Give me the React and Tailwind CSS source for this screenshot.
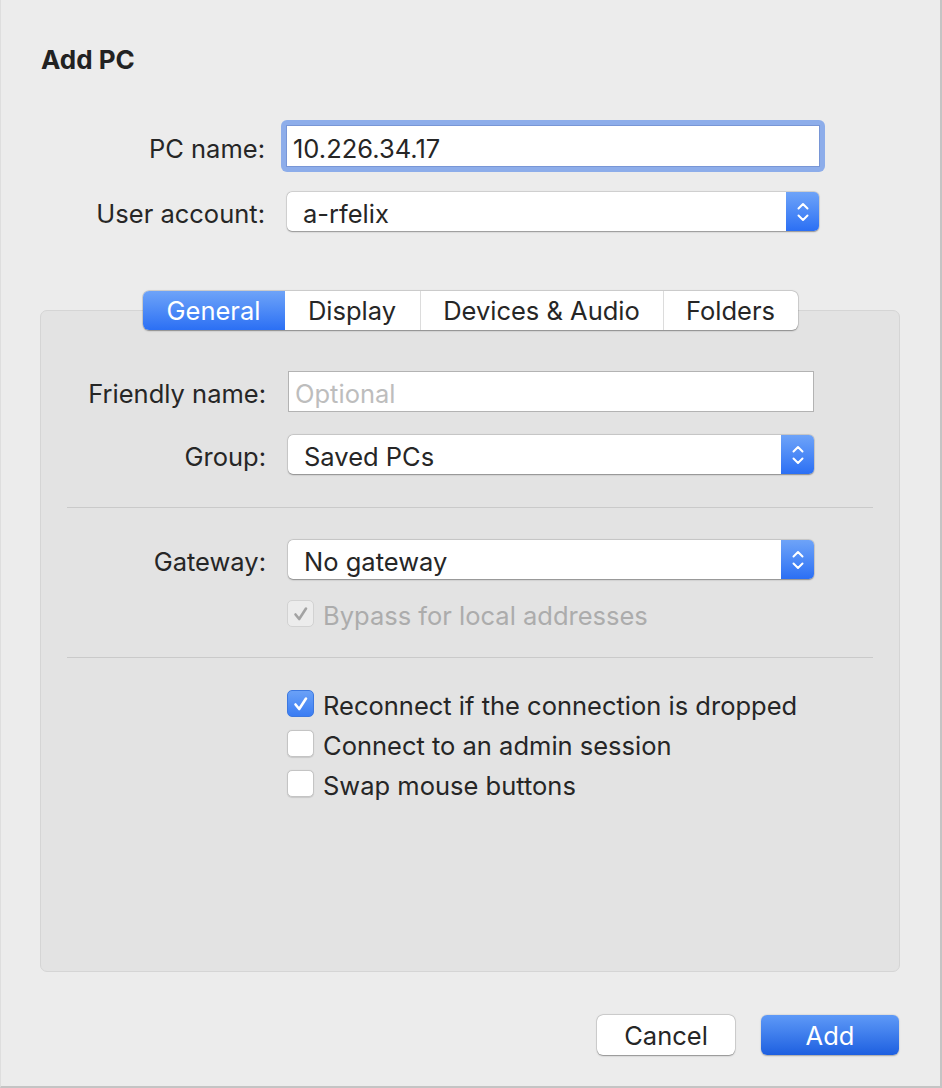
import React from 'react';

const font = "font-['Inter','Liberation_Sans',sans-serif]";

function Stepper() {
  return (
    <div className="w-[33px] h-full rounded-r-[5px] bg-gradient-to-b from-[#6ea3f8] to-[#2b6ff4] flex items-center justify-center">
      <svg width="16" height="28" viewBox="0 0 16 28" fill="none" stroke="white" strokeWidth="2" strokeLinecap="round" strokeLinejoin="round">
        <path d="M3.5 10.5 L8 6 L12.5 10.5" />
        <path d="M3.5 17.5 L8 22 L12.5 17.5" />
      </svg>
    </div>
  );
}

function Popup({ value, width }) {
  return (
    <div
      className={`${width} h-[39px] flex bg-white rounded-[5px] shadow-[0_0.5px_1.5px_rgba(0,0,0,0.35),0_0_0_0.5px_rgba(0,0,0,0.12)]`}
    >
      <div className="flex-1 flex items-center pl-[16px] text-[25.5px] text-[#262626]">
        <span className="translate-y-[3px]">{value}</span>
      </div>
      <Stepper />
    </div>
  );
}

function Check({ checked, disabled, label }) {
  let box = 'bg-white border border-[#c4c4c4] shadow-[0_0.5px_1px_rgba(0,0,0,0.12)]';
  if (checked && !disabled) box = 'bg-gradient-to-b from-[#6aa1f7] to-[#3a7cf3] border border-[#3c78e0]';
  if (disabled) box = 'bg-[#ececec] border border-[#d2d2d2]';
  return (
    <div className="flex items-center h-[27px]">
      <div className={`w-[27px] h-[27px] rounded-[5px] flex items-center justify-center ${box}`}>
        {checked && (
          <svg width="18" height="18" viewBox="0 0 18 18" fill="none" stroke={disabled ? '#a3a3a3' : 'white'} strokeWidth="2.6" strokeLinecap="round" strokeLinejoin="round">
            <path d="M3.5 9.5 L7.2 14 L14 3.5" />
          </svg>
        )}
      </div>
      <span className={`ml-[9px] text-[25.5px] leading-none translate-y-[2px] ${disabled ? 'text-[#acacac]' : 'text-[#262626]'}`}>{label}</span>
    </div>
  );
}

export default function App() {
  const tabs = [
    { name: 'General', w: 'w-[142px]' },
    { name: 'Display', w: 'w-[135px]' },
    { name: 'Devices & Audio', w: 'w-[243px]' },
    { name: 'Folders', w: 'w-[135px]' },
  ];

  return (
    <div className={`w-[942px] h-[1088px] bg-[#ececec] border-l border-l-[#dedede] border-r-2 border-r-[#c4c4c4] border-b-2 border-b-[#c4c4c4] ${font} text-[#262626] overflow-hidden`}>
      <h1 className="mt-[44px] ml-[40px] text-[26px] leading-[32px] font-bold text-[#222]">Add PC</h1>

      {/* PC name */}
      <div className="mt-[44px] flex items-center">
        <div className="w-[264px] text-right text-[25.5px] translate-y-[3px]">PC name:</div>
        <div className="ml-[16px] p-[5px] rounded-[6px] bg-[#8dadea]">
          <div className="w-[534px] h-[42px] border border-[#7896d6] bg-white flex items-center pl-[6px] text-[25.5px]">
            <span className="translate-y-[3px]">10.226.34.17</span>
          </div>
        </div>
      </div>

      {/* User account */}
      <div className="mt-[20px] flex items-center">
        <div className="w-[264px] text-right text-[25.5px] translate-y-[3px]">User account:</div>
        <div className="ml-[22px]">
          <Popup value="a-rfelix" width="w-[532px]" />
        </div>
      </div>

      {/* Panel */}
      <div className="mt-[79px] ml-[39px] w-[860px] h-[662px] bg-[#e3e3e3] border border-[#d5d5d5] rounded-[7px]">
        <div className="-mt-[20px] flex justify-center">
          <div className="flex h-[39px] bg-white rounded-[6px] shadow-[0_0.5px_1.5px_rgba(0,0,0,0.35),0_0_0_0.5px_rgba(0,0,0,0.15)] overflow-hidden">
            {tabs.map((t, i) => (
              <div
                key={t.name}
                className={`${t.w} flex items-center justify-center text-[25.5px] ${
                  i === 0
                    ? 'bg-gradient-to-b from-[#6ea3f8] to-[#2b6ff4] text-white'
                    : 'text-[#262626] border-l border-l-[#dcdcdc]'
                } ${i === 1 ? 'border-l-0' : ''}`}
              >
                <span className="translate-y-[1px]">{t.name}</span>
              </div>
            ))}
          </div>
        </div>

        {/* Friendly name */}
        <div className="mt-[41px] flex items-center">
          <div className="w-[225px] text-right text-[25.5px] translate-y-[3px]">Friendly name:</div>
          <div className="ml-[22px] w-[526px] h-[41px] bg-white border border-[#b3b3b3] flex items-center pl-[6px] text-[25.5px] text-[#bdbdbd]">
            <span className="translate-y-[3px]">Optional</span>
          </div>
        </div>

        {/* Group */}
        <div className="mt-[23px] flex items-center">
          <div className="w-[225px] text-right text-[25.5px] translate-y-[3px]">Group:</div>
          <div className="ml-[22px]">
            <Popup value="Saved PCs" width="w-[526px]" />
          </div>
        </div>

        <div className="mt-[33px] mx-[26px] h-px bg-[#cacaca]" />

        {/* Gateway */}
        <div className="mt-[32px] flex items-center">
          <div className="w-[225px] text-right text-[25.5px] translate-y-[3px]">Gateway:</div>
          <div className="ml-[22px]">
            <Popup value="No gateway" width="w-[526px]" />
          </div>
        </div>

        <div className="mt-[21px] ml-[246px]">
          <Check checked disabled label="Bypass for local addresses" />
        </div>

        <div className="mt-[30px] mx-[26px] h-px bg-[#cacaca]" />

        <div className="mt-[32px] ml-[246px] flex flex-col gap-[13px]">
          <Check checked label="Reconnect if the connection is dropped" />
          <Check label="Connect to an admin session" />
          <Check label="Swap mouse buttons" />
        </div>
      </div>

      {/* Buttons */}
      <div className="mt-[43px] flex justify-end gap-[26px] pr-[41px]">
        <button className="w-[138px] h-[40px] rounded-[6px] bg-white text-[25.5px] text-[#262626] shadow-[0_0.5px_1.5px_rgba(0,0,0,0.35),0_0_0_0.5px_rgba(0,0,0,0.15)]">
          <span className="inline-block translate-y-[1px]">Cancel</span>
        </button>
        <button className="w-[138px] h-[40px] rounded-[6px] bg-gradient-to-b from-[#5e99f7] to-[#1d5fe0] text-[25.5px] text-white shadow-[0_0.5px_1.5px_rgba(0,0,0,0.3)]">
          <span className="inline-block translate-y-[1px]">Add</span>
        </button>
      </div>
    </div>
  );
}
